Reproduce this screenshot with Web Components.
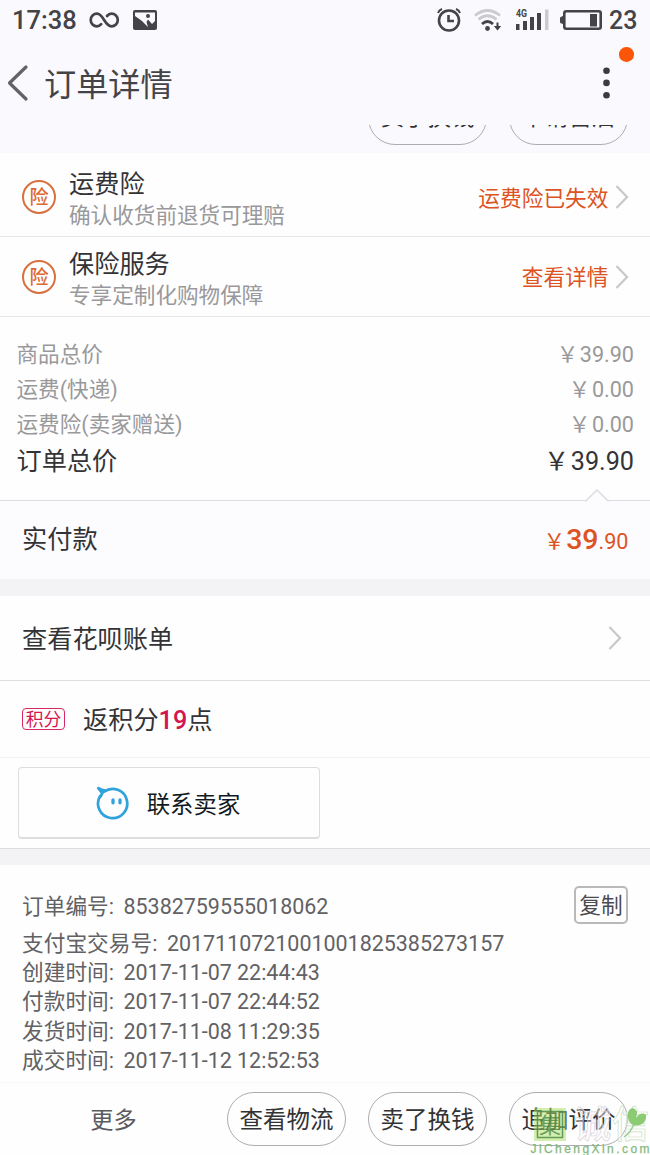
<!DOCTYPE html>
<html lang="zh-CN">
<head>
<meta charset="utf-8">
<title>订单详情</title>
<style>
html,body{margin:0;padding:0}
body{width:650px;height:1155px;overflow:hidden;background:#fefdfe;font-family:Roboto,"Noto Sans CJK SC",sans-serif;color:#333336}
</style>
</head>
<body>
<order-page></order-page>
<script>
function define(name, html) {
  const t = document.createElement('template');
  t.innerHTML = html;
  customElements.define(name, class extends HTMLElement {
    constructor() {
      super();
      this.attachShadow({ mode: 'open' }).appendChild(t.content.cloneNode(true));
    }
  });
}

define('status-bar', `
<style>
:host{display:flex;align-items:center;height:40px;padding:0 13px 0 12px;box-sizing:border-box;color:#444347;font-size:25.5px;font-weight:500;line-height:40px}
svg{display:block;flex:none}
.t{width:77px;letter-spacing:0}
.sp{flex:1}
.b{font-size:25px;width:28px;text-align:right;margin-left:7px;white-space:nowrap;padding-top:2px}
text{font:700 10px Roboto,sans-serif}
</style>
<span class="t">17:38</span>
<svg width="31" height="18" viewBox="0 0 31 18" fill="none" stroke="#444347" stroke-width="2.7" stroke-linecap="round"><path d="M12.2 13.2C10.8 14.8 9.5 15.3 8 15.3A6.3 6.3 0 0 1 8 2.700C14.500 2.700 15.500 15.300 22.500 15.300A6.300 6.300 0 0 0 22.500 2.700C20.800 2.700 19.300 3.500 18 5"/></svg>
<svg style="margin-left:13px" width="24" height="20" viewBox="0 0 24 20"><rect width="24" height="20" rx="2" fill="#444347"/><path d="M2 2.500H22V11L19 14 15 9.500 13.500 12 15 17 9 11 2 6Z" fill="#faf9fd"/><circle cx="15" cy="6" r="2" fill="#444347"/></svg>
<span class="sp"></span>
<svg width="24" height="26" viewBox="0 0 24 26" fill="none" stroke="#444347" stroke-width="2.600"><circle cx="12" cy="13.500" r="10"/><path d="M11.500 8V14H17"/><path d="M1 6Q2 3 5 2M19 2Q22 3 23 6" stroke-width="2"/></svg>
<svg style="margin-left:13px" width="29" height="24" viewBox="0 0 29 24" fill="none" stroke-width="2.800"><path d="M1 7.500Q13.500-2.500 26 7.500M4.500 11.500Q13.500 4 22.500 11.500" stroke="#cbcace"/><path d="M8 16Q13.500 11 19 16" stroke="#444347"/><circle cx="13.500" cy="20.500" r="2.400" fill="#444347"/><path d="M23.500 14.500V21" stroke="#444347" stroke-width="2"/><path d="M19.800 18H27.200L23.500 22.500Z" fill="#444347"/></svg>
<svg style="margin-left:12px" width="35" height="24" viewBox="0 0 35 24" fill="#444347"><text x="1" y="9" textLength="11" lengthAdjust="spacingAndGlyphs">4G</text><path d="M1 16h3.500v6H1zM8 13h4v9H8zM15 9h4v13h-4zM22 5h4v17h-4z"/><path d="M30 1.500h3.500V22H30z" fill="#cbcace"/></svg>
<svg style="margin-left:10px" width="42" height="22" viewBox="0 0 42 22"><rect x="4.300" y="2.300" width="36.400" height="17.400" rx="2" fill="none" stroke="#444347" stroke-width="2.600"/><path d="M0 9Q0 7.500 2 7.500L4 6V16L2 14.500Q0 14.500 0 13Z M30 5h7v12.500h-7z" fill="#444347"/></svg>
<span class="b">23</span>`);

define('title-bar', `
<style>
:host{display:flex;align-items:center;height:85px;padding:0 38px 0 7px;position:relative;font-size:32.2px;line-height:50px;color:#444347}
svg{display:block}
.title{flex:1;margin-left:15px;padding-top:4px}
.dot{position:absolute;right:16px;top:7px;width:14.600px;height:14.600px;border-radius:50%;background:#fb5607}
</style>
<svg width="22" height="38" viewBox="0 0 22 38" fill="none" stroke="#626367" stroke-width="3.200" stroke-linecap="round" stroke-linejoin="round"><path d="M19 3L2.500 19 19 35"/></svg>
<span class="title"><slot></slot></span>
<svg width="11" height="38" viewBox="0 0 11 38" fill="#3c3b40"><circle cx="5.500" cy="6.700" r="3.300"/><circle cx="5.500" cy="18.900" r="3.300"/><circle cx="5.500" cy="31.200" r="3.300"/></svg>
<i class="dot"></i>`);

define('pill-button', `
<style>
:host{display:block;box-sizing:border-box;width:119px;height:54px;border:1px solid #adacaf;border-radius:27px;font-size:23.5px;line-height:var(--lh,55px);text-align:center;color:#333336;white-space:nowrap}
</style><slot></slot>`);

define('scrolled-actions', `
<style>
:host{--lh:50px;display:flex;justify-content:flex-end;align-items:flex-end;gap:22px;height:28px;padding:0 22px 8.500px 0;box-sizing:border-box;overflow:hidden}
</style><slot></slot>`);

define('chevron-icon', `
<style>:host{display:block;width:14px;height:24px}svg{display:block}</style>
<svg width="14" height="24" viewBox="0 0 14 24" fill="none" stroke="#c9c9cc" stroke-width="2.300"><path d="M1.500 1L12 12 1.500 23"/></svg>`);

define('insurance-row', `
<style>
:host{display:flex;align-items:center;box-sizing:border-box;height:var(--h,80px);padding:0 21px 0 22px;border-bottom:1px solid #e5e4e7;background:#fefefe}
.badge{box-sizing:border-box;width:34px;height:34px;border:2px solid #d9703f;border-radius:50%;color:#dd6a35;font-size:19px;font-weight:500;line-height:31px;text-align:center;margin-top:var(--m,1px)}
.txt{flex:1;margin-left:13px;padding-top:var(--tp,7px)}
.a{font-size:25.2px;line-height:31px}
.s{font-size:21.6px;line-height:32px;color:#99989b}
.link{font-size:21.7px;line-height:34px;color:#dc5424;margin:var(--lm,3px) 6.500px 0 0}
chevron-icon{margin-top:var(--m,1px)}
</style>
<span class="badge">险</span>
<div class="txt"><div class="a"><slot name="title"></slot></div><div class="s"><slot></slot></div></div>
<span class="link"><slot name="link"></slot></span><chevron-icon></chevron-icon>`);

define('price-row', `
<style>
:host{display:flex;justify-content:space-between;font-size:21.6px;line-height:35px;height:35px;color:#99999b;white-space:nowrap}
:host([total]){font-size:25.2px;line-height:40px;height:40px;color:#343437}
i{font-style:normal;letter-spacing:1.500px}
</style><span><slot></slot></span><span><i>￥</i><slot name="value"></slot></span>`);

define('price-list', `
<style>:host{display:block;height:183px;box-sizing:border-box;padding:20px 16px 0 16.500px;background:#fefefe}</style><slot></slot>`);

define('paid-row', `
<style>
:host{display:flex;justify-content:space-between;align-items:center;box-sizing:border-box;position:relative;height:79px;padding:0 21.500px 0 22px;border-top:1.500px solid #dddce0;background:#fcfbfe;font-size:25.2px;line-height:40px}
.p{font-size:21.6px;color:#dc5424;padding-top:2px}
b{font-weight:500;font-size:28.500px}
i{font-style:normal;letter-spacing:1px}
svg{position:absolute;right:41px;top:-12px}
</style>
<svg width="24" height="14" viewBox="0 0 24 14"><path d="M0 13.500L1 11.700 12 1 23 11.700 24 13.500Z" fill="#fcfbfe"/><path d="M0 11.700H1L12 1 23 11.700H24" fill="none" stroke="#dddce0" stroke-width="1.500"/></svg>
<span><slot></slot></span><span class="p"><i>￥</i><b>39</b>.90</span>`);

define('section-gap', `<style>:host{display:block;height:17px;background:#f3f2f5}</style>`);

define('bill-row', `
<style>
:host{display:flex;justify-content:space-between;align-items:center;box-sizing:border-box;height:85px;padding:0 28px 0 22px;border-bottom:1px solid #dfdee1;background:#fefefe;font-size:25.2px;line-height:40px}
span{padding-top:3px}
</style><span><slot></slot></span><chevron-icon></chevron-icon>`);

define('points-row', `
<style>
:host{display:flex;align-items:center;box-sizing:border-box;height:77px;padding:0 22px;border-bottom:1px solid #f3f2f4;background:#fefefe;font-size:25.2px;line-height:40px}
.tag{box-sizing:border-box;width:43px;height:22px;border:1.300px solid #d62a60;border-radius:4px;color:#d4154f;font-size:17.800px;line-height:21px;text-align:center;white-space:nowrap}
.txt{margin-left:18px;padding-top:4px}
b{color:#d4154f;font-weight:500}
</style>
<span class="tag">积分</span><span class="txt">返积分<b>19</b>点</span>`);

define('contact-seller', `
<style>
:host{display:block;box-sizing:border-box;height:91px;padding:9px 18px;border-bottom:1px solid #dddce0;background:#fefefe}
.btn{display:flex;align-items:center;justify-content:center;gap:18px;box-sizing:border-box;width:302px;height:72px;border:1.500px solid #dddddf;border-bottom-width:2px;border-radius:4px;font-size:23.400px;line-height:40px;color:#111a24;padding-right:2px}
.btn span{padding-top:4px}
</style>
<div class="btn">
<svg width="33" height="34" viewBox="0 0 33 34" fill="none" stroke="#2fa3dc" stroke-width="2.700" stroke-linecap="round" stroke-linejoin="round"><path d="M8.200 5.600A14.600 14.600 0 1 1 4 10.200M4.200 11L6.400 7.300 2.300 2.200Q5.500 4.500 9.500 4.700"/><path d="M17 14v2.800M24 14v2.800" stroke-width="3.300"/></svg>
<span><slot></slot></span></div>`);

define('info-line', `
<style>
:host{display:flex;font-size:21.700px;line-height:29.400px;height:29.400px;color:#626164;white-space:nowrap}
.v{font-size:21.450px;margin-left:9.500px}
</style><span><slot></slot></span><span class="v"><slot name="value"></slot></span>`);

define('order-info', `
<style>
:host{display:block;box-sizing:border-box;position:relative;height:217px;padding:27px 22px 0 22px;background:#fefefe}
.first{display:flex;justify-content:space-between;align-items:flex-start;height:36.500px}
.copy{box-sizing:border-box;width:54px;height:38px;margin-top:-6px;border:2px solid #b9b9bb;border-radius:5px;font-size:21.700px;line-height:35px;text-align:center;color:#4b4a4e;white-space:nowrap}
</style>
<div class="first"><slot name="number"></slot><span class="copy">复制</span></div>
<slot></slot>`);

define('action-bar', `
<style>
:host{display:flex;box-sizing:border-box;align-items:flex-start;gap:22px;height:73px;padding:9px 22px 0 0;border-top:1px solid #f8f7fa;background:#fefefe}
.more{flex:1;text-align:center;font-size:23.200px;line-height:57px;color:#5b5a5e;padding-left:22px}
</style>
<span class="more">更多</span><slot></slot>`);

define('site-mark', `
<style>
:host{position:absolute;left:529px;top:1104px;width:121px;height:51px}
svg{display:block}
text{font-family:"Noto Sans CJK SC",sans-serif}
.u{font-family:"Liberation Sans",sans-serif}
</style>
<svg width="121" height="51" viewBox="0 0 121 51">
<rect x="5" y="4" width="32" height="33" fill="#a8e05f" opacity=".5"/>
<rect x="8.500" y="7.500" width="25" height="26" fill="none" stroke="#4f8b49" stroke-width="1.500" opacity=".85"/>
<text x="10" y="28.500" font-size="22" fill="#48813f" opacity=".75">集</text>
<text x="45" y="33.500" font-size="37" font-weight="500" fill="#fff" fill-opacity=".35" stroke="#dcd2dd" stroke-width=".7">诚</text>
<text x="83" y="33.500" font-size="37" font-weight="500" fill="#fff" fill-opacity=".35" stroke="#cbdfc4" stroke-width=".7">信</text>
<path d="M95 33Q102 28 105 20" fill="none" stroke="#9ccf95" stroke-width="1.500"/>
<path d="M104 21C97 17 97 5 104 4Q110 6 107 14Q112 7 117 11C118 19 111 23 104 21Z" fill="#8acb74"/>
<text class="u" x="1.500" y="48.800" font-size="12" textLength="119" stroke="#83b97a" stroke-width=".25" fill="#83b97a">JiChengXin.com</text>
</svg>`);

define('order-page', `
<style>
:host{display:flex;flex-direction:column;position:relative;width:650px;height:1155px;background:#faf9fd;overflow:hidden}
:host>*{flex:none}
</style>
<status-bar></status-bar>
<title-bar>订单详情</title-bar>
<scrolled-actions><pill-button>卖了换钱</pill-button><pill-button>申请售后</pill-button></scrolled-actions>
<insurance-row style="--h:84px;--m:5px;--tp:12px;--lm:8px"><span slot="title">运费险</span>确认收货前退货可理赔<span slot="link">运费险已失效</span></insurance-row>
<insurance-row><span slot="title">保险服务</span>专享定制化购物保障<span slot="link">查看详情</span></insurance-row>
<price-list>
<price-row>商品总价<span slot="value">39.90</span></price-row>
<price-row>运费(快递)<span slot="value">0.00</span></price-row>
<price-row>运费险(卖家赠送)<span slot="value">0.00</span></price-row>
<price-row total>订单总价<span slot="value">39.90</span></price-row>
</price-list>
<paid-row>实付款</paid-row>
<section-gap></section-gap>
<bill-row>查看花呗账单</bill-row>
<points-row></points-row>
<contact-seller>联系卖家</contact-seller>
<section-gap style="height:16px"></section-gap>
<order-info>
<info-line slot="number">订单编号:<span slot="value">85382759555018062</span></info-line>
<info-line>支付宝交易号:<span slot="value">2017110721001001825385273157</span></info-line>
<info-line>创建时间:<span slot="value">2017-11-07 22:44:43</span></info-line>
<info-line>付款时间:<span slot="value">2017-11-07 22:44:52</span></info-line>
<info-line>发货时间:<span slot="value">2017-11-08 11:29:35</span></info-line>
<info-line>成交时间:<span slot="value">2017-11-12 12:52:53</span></info-line>
</order-info>
<action-bar><pill-button>查看物流</pill-button><pill-button>卖了换钱</pill-button><pill-button>追加评价</pill-button></action-bar>
<site-mark></site-mark>`);
</script>
</body>
</html>
